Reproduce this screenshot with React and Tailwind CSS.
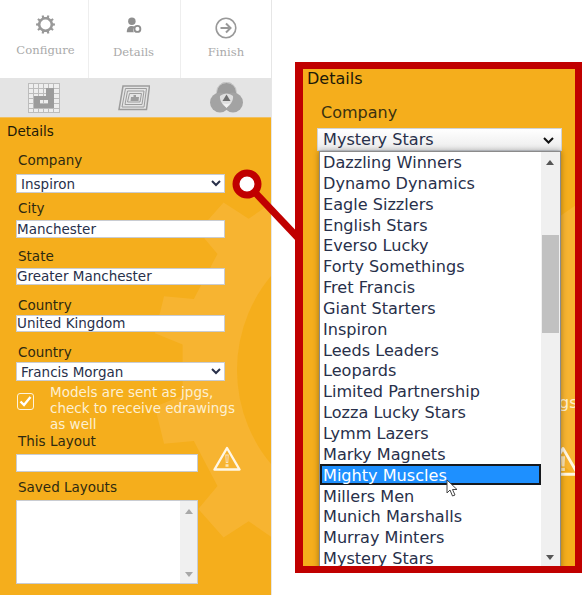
import React from 'react';

const FONT = "font-['DejaVu_Sans',Verdana,sans-serif]";
const COMPANIES = [
  'Dazzling Winners', 'Dynamo Dynamics', 'Eagle Sizzlers', 'English Stars', 'Everso Lucky',
  'Forty Somethings', 'Fret Francis', 'Giant Starters', 'Inspiron', 'Leeds Leaders', 'Leopards',
  'Limited Partnership', 'Lozza Lucky Stars', 'Lymm Lazers', 'Marky Magnets', 'Mighty Muscles',
  'Millers Men', 'Munich Marshalls', 'Murray Minters', 'Mystery Stars',
];

// cog outline, used for the tab icon and the panel watermark
const gearPath = (cx, cy, outer, inner, teeth) => {
  const pts = [];
  const step = (Math.PI * 2) / teeth;
  for (let i = 0; i < teeth; i++) {
    const a = i * step;
    const w = step * 0.24;
    const t = step * 0.17;
    [[a - w, inner], [a - t, outer], [a + t, outer], [a + w, inner]].forEach(([ang, r]) => {
      pts.push(`${(cx + Math.cos(ang) * r).toFixed(2)} ${(cy + Math.sin(ang) * r).toFixed(2)}`);
    });
  }
  return `M${pts.join('L')}Z`;
};

const GearWatermark = () => (
  <svg className="absolute left-0 top-0 pointer-events-none" width="271" height="477" viewBox="0 118 271 477">
    <path d={gearPath(384, 370, 232, 203, 13)} fill="#f7b431" />
    <circle cx="384" cy="370" r="147" fill="#f5ae1c" />
  </svg>
);

const ConfigureIcon = () => (
  <svg width="19" height="19" viewBox="0 0 22 22">
    <path d={gearPath(11, 11, 11, 8.8, 10)} fill="#999" />
    <circle cx="11" cy="11" r="5.8" fill="#fff" />
  </svg>
);

const DetailsIcon = () => (
  <svg width="16" height="17" viewBox="0 0 18 20">
    <circle cx="6.5" cy="5" r="4.4" fill="#8f8f8f" />
    <path d="M0.5 18c0-5.500 2.500-7.500 6-7.500 1.500 0 2.500 0.400 3.400 1-1.800 1.400-2.400 4.700-1 6.500z" fill="#8f8f8f" />
    <circle cx="13" cy="14" r="3.500" fill="none" stroke="#8f8f8f" strokeWidth="2.200" />
  </svg>
);

const FinishIcon = () => (
  <svg width="22" height="22" viewBox="0 0 22 22" fill="none" stroke="#999">
    <circle cx="11" cy="11" r="9.800" strokeWidth="1.600" />
    <path d="M5.500 11h10M11 6.500l4.500 4.500-4.500 4.500" strokeWidth="2" />
  </svg>
);

const GridIcon = () => (
  <svg width="32" height="30" viewBox="0 0 32 30">
    <rect width="32" height="30" fill="#eeeeee" />
    <path d="M0.500 0v30M5.500 0v30M10.500 0v30M15.500 0v30M20.500 0v30M25.500 0v30M31.500 0v30M0 0.500h32M0 5.500h32M0 10.500h32M0 15.500h32M0 20.500h32M0 25.500h32M0 29.500h32" stroke="#bcbcbc" strokeWidth="1" />
    <path d="M18 5h8v20H6V13h12zM12 17v4h8v-4z" fill="#9c9c9c" fillRule="evenodd" />
  </svg>
);

const LayersIcon = () => (
  <svg width="32" height="26" viewBox="0 0 32 26" fill="none" stroke="#9c9c9c" strokeWidth="1">
    <path d="M5 1H31.500L28.500 24.500H1z" strokeWidth="1.500" />
    <path d="M7.500 3.500H28.500L26 22H4z" />
    <path d="M9.500 6H26L24 19.500H7z" />
    <path d="M11.500 8.500H23.500L22 17H9.500z" />
    <path d="M15.500 10h2.500v2h3l-.5 4h-8l.5-4h2.500z" fill="#9c9c9c" stroke="none" />
  </svg>
);

const CirclesIcon = () => (
  <svg width="33" height="31" viewBox="0 0 33 31">
    <circle cx="16.500" cy="10" r="10" fill="#9c9c9c" />
    <circle cx="10" cy="20.500" r="10" fill="#a3a3a3" />
    <circle cx="23" cy="20.500" r="10" fill="#a3a3a3" />
    <path d="M6.500 10.500a10 10 0 0 1 20 0" fill="none" stroke="#d0d0d0" strokeWidth="1" />
    <path d="M10 14c4-3.500 9-3.500 13 0 0.500 4-2 9-6.500 11.500C12 23 9.500 18 10 14z" fill="#dedede" />
    <path d="M16.500 12.500l4 6.500h-8z" fill="#6f6f6f" />
    <path d="M12.500 21a9 9 0 0 0 8 0l-4 5z" fill="#f2f2f2" />
  </svg>
);

const WarningIcon = () => (
  <svg width="28" height="25" viewBox="0 0 28 25" fill="none">
    <path d="M14 2L26.500 23.500H1.500z" stroke="#fff7e6" strokeWidth="2.400" strokeLinejoin="round" />
    <path d="M12.300 8.500h3.400l-.5 8.500h-2.400zM12.500 18.200h3v2.600h-3z" fill="#fce6b8" />
    <path d="M13.500 9.500h1l-.2 6.500h-.6z" fill="#e9982e" />
  </svg>
);

const Tab = ({ icon, label, border, pad, gap }) => (
  <div className={`flex flex-col items-center ${pad} ${border}`}>
    <div className="h-[24px] flex items-center">{icon}</div>
    <span className={`font-['DejaVu_Serif',serif] text-[11.600px] leading-[14px] text-[#a9a9a9] ${gap}`}>{label}</span>
  </div>
);

const Label = ({ children, mt }) => (
  <div className={`text-[13.500px] leading-[16px] text-[#2e2a10] pl-[18px] ${mt}`}>{children}</div>
);

const TextBox = ({ value, mt, h }) => (
  <input
    readOnly
    value={value}
    className={`block ml-[16px] w-[209px] ${h} ${mt} bg-white border border-[#c9ccd2] text-[13.500px] text-[#28304a] outline-none`}
  />
);

const Dropdown = ({ value, mt }) => (
  <select
    value={value}
    onChange={() => {}}
    className={`block ml-[16px] w-[209px] h-[19px] ${mt} bg-white border border-[#c9ccd2] text-[13.500px] text-[#28304a] outline-none`}
  >
    <option>{value}</option>
  </select>
);

const Callout = () => (
  <div className="absolute left-[295px] top-[62px] w-[287px] h-[511px] border-y-[7px] border-l-[8px] border-r-[7px] border-[#c00000] bg-[#f5ae1c] overflow-hidden">
    {/* enlarged panel content that shows past the open list */}
    <svg className="absolute left-0 top-0" width="272" height="497" viewBox="303 69 272 497">
      <path d={gearPath(660, 340, 176, 160, 13)} fill="#f7b431" />
    </svg>
    <span className="absolute left-[256px] top-[324px] text-[16px] leading-[20px] text-[#fdf0d2]">gs</span>
    <div className="absolute left-[243px] top-[377px]">
      <svg width="34" height="30" viewBox="0 0 28 25" fill="none">
        <path d="M14 2L26.500 23.500H1.500z" stroke="#fff7e6" strokeWidth="2.400" strokeLinejoin="round" />
        <path d="M12.300 8.500h3.400l-.5 8.500h-2.400zM12.500 18.200h3v2.600h-3z" fill="#fce6b8" />
      </svg>
    </div>
    <div className="relative text-[16px] leading-[20px] text-[#1d1a08] pl-[4px]">Details</div>
    <div className="relative text-[16px] leading-[20px] text-[#3a3210] pl-[18px] mt-[14px]">Company</div>
    <div className="relative ml-[14px] mt-[5px] w-[245px] h-[23px] pl-[5px] pr-[7px] pt-[2px] flex items-center justify-between bg-gradient-to-b from-white to-[#ececec] border border-[#cfd3d8] text-[16.100px] text-[#28304a]">
      Mystery Stars
      <svg width="11" height="7" viewBox="0 0 11 7" fill="none" stroke="#111" strokeWidth="2"><path d="M1 1l4.500 4.500L10 1" /></svg>
    </div>
    <div className="relative ml-[16px] w-[242px] h-[420px] flex bg-white border-x border-t border-[#8b8b8b] shadow-[0_0_6px_rgba(0,0,0,0.35)]">
      <ul className="flex-1 pt-[1px] text-[16.100px] leading-[20px] text-[#28304a]">
        {COMPANIES.map((name) => (
          <li
            key={name}
            className={name === 'Mighty Muscles'
              ? '-mt-[1.500px] mb-[1.350px] h-[21px] bg-[#1e90ff] text-white border-2 border-[#16191d] pl-[1px]'
              : 'h-[20.850px] pl-[3px]'}
          >
            {name}
          </li>
        ))}
      </ul>
      <div className="w-[19px] bg-[#f0f0f0] relative">
        <div className="absolute left-[5px] top-[8px] border-x-[4px] border-b-[5px] border-x-transparent border-b-[#555]" />
        <div className="absolute left-[1px] top-[83px] w-[17px] h-[98px] bg-[#c1c1c1]" />
        <div className="absolute left-[5px] top-[403px] border-x-[4px] border-t-[5px] border-x-transparent border-t-[#555]" />
      </div>
    </div>
    {/* pointer over the highlighted row */}
    <svg className="absolute left-[143px] top-[410px]" width="14" height="19" viewBox="0 0 14 19">
      <path d="M1 1v13l3-3 2.500 6 2.500-1-2.500-5.500H11z" fill="#fff" stroke="#444" strokeWidth="1" />
    </svg>
  </div>
);

export default function App() {
  return (
    <div className={`relative w-[583px] h-[595px] bg-white overflow-hidden ${FONT}`}>
      <div className="w-[272px] h-[595px] flex flex-col border-r border-[#e6e6e6]">
        <div className="grid grid-cols-[89px_92px_90px] h-[78px]">
          <Tab icon={<ConfigureIcon />} label="Configure" border="border-r border-[#eeeeee]" pad="pt-[12px] pl-[3px]" gap="mt-[7px]" />
          <Tab icon={<DetailsIcon />} label="Details" border="border-r border-[#eeeeee]" pad="pt-[13px] pr-[2px]" gap="mt-[8px]" />
          <Tab icon={<FinishIcon />} label="Finish" pad="pt-[16px]" gap="mt-[5px]" />
        </div>
        <div className="grid grid-cols-[87px_94px_90px] h-[40px] bg-[#e4e4e4] items-center justify-items-center border-b border-[#f0c060]">
          <GridIcon />
          <LayersIcon />
          <CirclesIcon />
        </div>
        <div className="relative flex-1 bg-[#f5ae1c] overflow-hidden">
          <GearWatermark />
          <div className="relative">
            <div className="text-[13.500px] leading-[16px] text-[#1d1a08] pl-[7px] mt-[5px]">Details</div>
            <Label mt="mt-[13px]">Company</Label>
            <Dropdown value="Inspiron" mt="mt-[6px]" />
            <Label mt="mt-[7px]">City</Label>
            <TextBox value="Manchester" mt="mt-[4px]" h="h-[18px]" />
            <Label mt="mt-[10px]">State</Label>
            <TextBox value="Greater Manchester" mt="mt-[4px]" h="h-[17px]" />
            <Label mt="mt-[12px]">Country</Label>
            <TextBox value="United Kingdom" mt="mt-[2px]" h="h-[17px]" />
            <Label mt="mt-[12px]">Country</Label>
            <Dropdown value="Francis Morgan" mt="mt-[2px]" />
            <div className="flex mt-[3px] pl-[17px]">
              <div className="w-[17px] h-[17px] mt-[9px] rounded-[3px] border-[1.500px] border-[#fdf3dc] flex items-center justify-center">
                <svg width="13" height="11" viewBox="0 0 13 11" fill="none" stroke="#fff" strokeWidth="2.400"><path d="M1.500 5.500l3.500 3.500 6.500-8" /></svg>
              </div>
              <div className="ml-[16px] w-[200px] text-[13.500px] leading-[16px] text-[#fdf0d2]">
                Models are sent as jpgs, check to receive edrawings as well
              </div>
            </div>
            <Label mt="mt-[1px]">This Layout</Label>
            <div className="flex items-start mt-[5px] ml-[16px]">
              <input readOnly className="block w-[182px] h-[18px] bg-white border border-[#c9ccd2] outline-none" />
              <div className="ml-[15px] -mt-[8px]"><WarningIcon /></div>
            </div>
            <Label mt="mt-[7px]">Saved Layouts</Label>
            <div className="ml-[16px] mt-[5px] w-[182px] h-[84px] bg-white border border-[#c9ccd2] flex justify-end">
              <div className="relative w-[17px] bg-[#f0f0f0]">
                <div className="absolute left-[5px] top-[8px] border-x-[4px] border-b-[5px] border-x-transparent border-b-[#a8a8a8]" />
                <div className="absolute left-[5px] bottom-[6px] border-x-[4px] border-t-[5px] border-x-transparent border-t-[#a8a8a8]" />
              </div>
            </div>
          </div>
        </div>
      </div>

      {/* connector from the field to the zoomed view */}
      <svg className="absolute left-0 top-0 pointer-events-none" width="583" height="595">
        <line x1="247" y1="184" x2="300" y2="240" stroke="#c00000" strokeWidth="7" />
        <circle cx="247" cy="184" r="11" fill="#fff" stroke="#c00000" strokeWidth="7" />
      </svg>
      <Callout />
    </div>
  );
}
